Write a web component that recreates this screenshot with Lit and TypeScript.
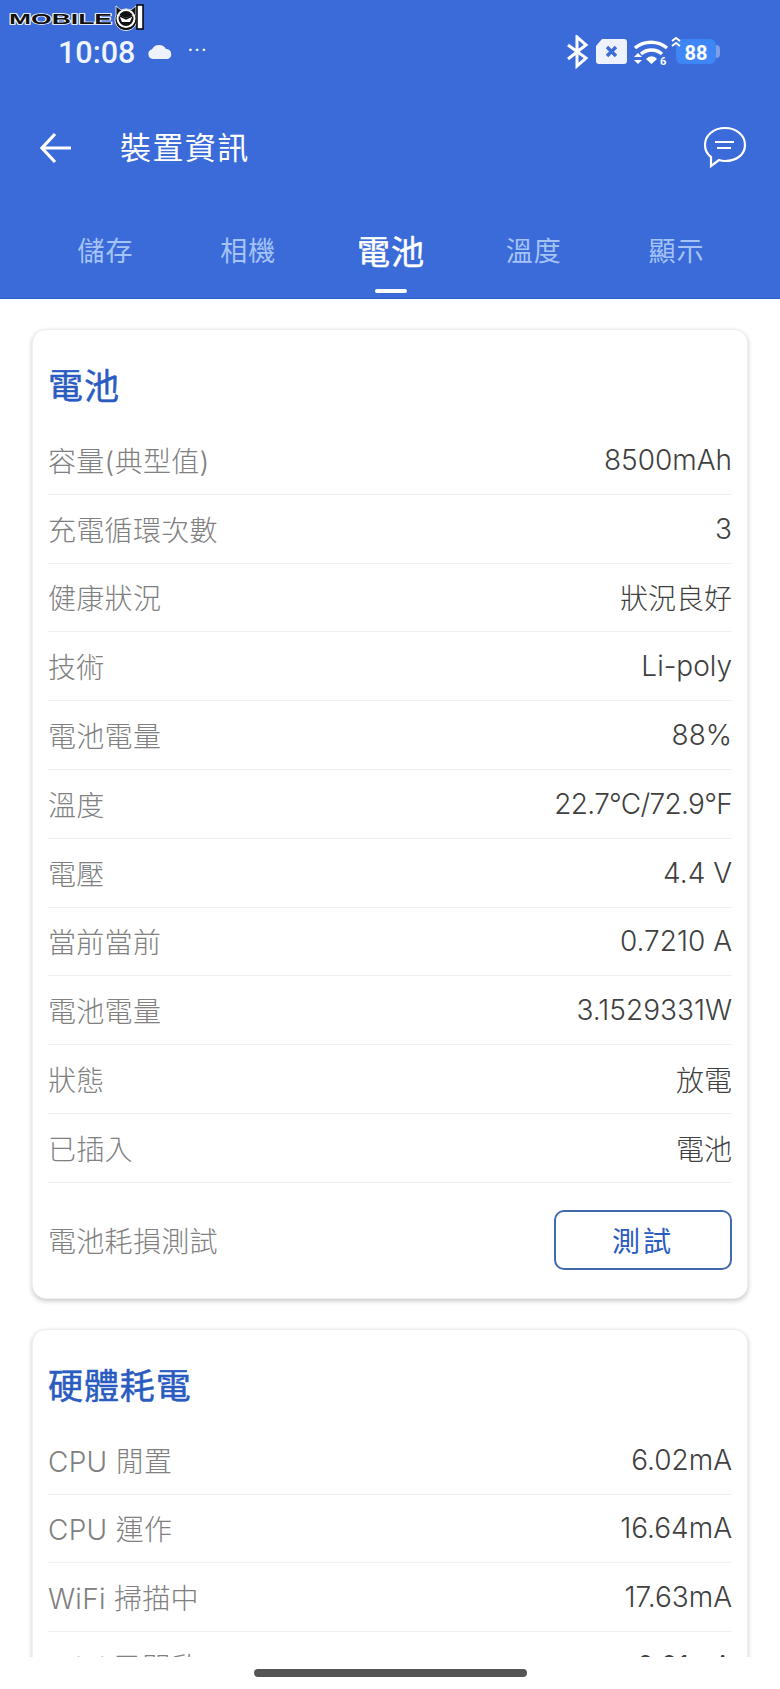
import { LitElement, html, css } from "lit";
import { customElement } from "lit/decorators.js";

const battery: [string, string, boolean?][] = [
  ["容量(典型值)", "8500mAh"],
  ["充電循環次數", "3"],
  ["健康狀況", "狀況良好"],
  ["技術", "Li-poly"],
  ["電池電量", "88%"],
  ["溫度", "22.7°C/72.9°F", true],
  ["電壓", "4.4 V"],
  ["當前當前", "0.7210 A"],
  ["電池電量", "3.1529331W"],
  ["狀態", "放電"],
  ["已插入", "電池"],
];
const hardware: [string, string, boolean?][] = [
  ["CPU 閒置", "6.02mA"],
  ["CPU 運作", "16.64mA"],
  ["WiFi 掃描中", "17.63mA"],
  ["WiFi 已開啟", "0.01mA"],
  ["WiFi 傳輸", "0.01mA"],
];

@customElement("app-root")
export class AppRoot extends LitElement {
  static styles = css`
    :host {
      display: flex;
      flex-direction: column;
      position: relative;
      width: 780px;
      height: 1689px;
      overflow: hidden;
      background: #fff;
      font-family: Inter, "Noto Sans CJK TC", sans-serif;
    }
    .logo { position: absolute; left: 8px; top: 4px; }
    .header { background: #3a6bd9; height: 299px; flex: none; display: flex; flex-direction: column; color: #fff; border-bottom: 1px solid #2f5dc6; box-sizing: border-box; }
    .status { height: 88px; flex: none; display: flex; align-items: center; justify-content: space-between; padding: 16px 59px 0 58px; box-sizing: border-box; font-family: Roboto, sans-serif; }
    .status-left { display: flex; align-items: center; gap: 12px; }
    .time { font-size: 30.5px; font-weight: 500; color: #f0f4fd; }
    .dots { font-size: 22px; letter-spacing: 1px; margin-left: 2px; margin-bottom: 4px; }
    .status-right { display: flex; align-items: center; }
    .toolbar { height: 120px; flex: none; display: flex; align-items: center; padding: 0 33px 0 39px; }
    .page-title { font-size: 31px; margin-left: 47px; flex: 1; font-weight: 400; letter-spacing: 1.4px; padding-bottom: 6px; }
    .tabs { flex: 1; display: grid; grid-template-columns: repeat(5, 142.8px); padding: 0 36px 0 34px; margin-top: 24px; }
    .tab { display: flex; flex-direction: column; align-items: center; font-size: 27px; color: #a5c3f6; height: 100%; position: relative; letter-spacing: 1px; }
    .tab span { line-height: 40px; }
    .tab.on { color: #fff; font-size: 33px; font-weight: 400; letter-spacing: 1px; -webkit-text-stroke: 0.5px #fff; }
    .tab.on::after { content: ""; position: absolute; bottom: 5px; width: 32px; height: 4px; border-radius: 2px; background: #fff; }
    .content { flex: 1; overflow: hidden; padding: 30px 32px 0; display: flex; flex-direction: column; gap: 30px; min-height: 0; }
    .card { flex: none; background: #fff; border-radius: 14px; border: 1px solid #efefef; box-shadow: 0 2px 5px rgba(0,0,0,.22); padding: 0 15px; }
    .card h2 { margin: 0; font-size: 35px; line-height: 44px; padding-top: 34px; padding-bottom: 18px; font-weight: 400; color: #2a5bc0; letter-spacing: 0.9px; -webkit-text-stroke: 0.5px #2a5bc0; }
    .row { display: flex; justify-content: space-between; align-items: center; box-sizing: border-box; height: 68.8px; border-bottom: 1px solid #f0f0f0; font-size: 28px; font-weight: 300; }
    .row:last-child { border-bottom: 0; }
    .k { color: #808080; letter-spacing: 0.3px; }
    .v { color: #404040; }
    .v.tight { letter-spacing: -0.7px; }
    .test { height: 115px; }
    .btn { width: 178px; height: 60px; box-sizing: border-box; border: 2px solid #4169ae; border-radius: 10px; color: #2a5bc0; font-size: 28px; font-weight: 400; display: flex; align-items: center; justify-content: center; letter-spacing: 3px; }
    .nav { height: 32px; flex: none; background: #fff; display: flex; justify-content: center; align-items: flex-start; padding-top: 12px; box-sizing: border-box; }
    .pill { width: 273px; height: 8px; border-radius: 4px; background: #555; }
  `;

  row(r: [string, string, boolean?]) {
    return html`<div class="row"><span class="k">${r[0]}</span><span class="v ${r[2] ? "tight" : ""}">${r[1]}</span></div>`;
  }

  render() {
    return html`
      <div class="header">
        <div class="status">
          <div class="status-left">
            <span class="time">10:08</span>
            <svg width="26" height="16" viewBox="0 0 26 16"><path d="M6 15a5 5 0 0 1-1-9.8A8 8 0 0 1 19 5a5.2 5.2 0 0 1 2 10z" fill="#eef2fc"/></svg>
            <span class="dots">···</span>
          </div>
          <div class="status-right">
            <svg width="154" height="34" viewBox="0 0 154 34">
              <path d="M1 10l18 13-9 8V2l9 8L1 24" fill="none" stroke="#fff" stroke-width="3"/>
              <path d="M35 4h22a3 3 0 0 1 3 3v19a3 3 0 0 1-3 3H32a3 3 0 0 1-3-3V11z" fill="#eef2fc"/>
              <path d="M40 12l9 9m0-9l-9 9" stroke="#3a6bd9" stroke-width="3.4"/>
              <path d="M68 13a25 25 0 0 1 32 0M74 19a16 16 0 0 1 21 0" fill="none" stroke="#fff" stroke-width="3.4"/>
              <path d="M79 24a7 7 0 0 1 11 0l-5.5 5z" fill="#fff"/>
              <path d="M67 22l4-4 4 4zM67 25l4 4 4-4z" fill="#fff"/>
              <text x="93" y="30" font-size="11" font-weight="700" fill="#fff" font-family="Roboto">6</text>
              <rect x="109" y="4" width="40" height="25" rx="6" fill="#3e86f5"/>
              <path d="M149 10a4 4 0 0 1 4 4v5a4 4 0 0 1-4 4z" fill="#7f9fe6"/>
              <path d="M105 6l4-3 4 3M105 11l4-3 4 3" fill="none" stroke="#fff" stroke-width="2"/>
              <text x="129" y="24.5" font-size="20" font-weight="700" text-anchor="middle" fill="#fff" font-family="Roboto">88</text>
            </svg>
          </div>
        </div>
        <div class="toolbar">
          <svg width="34" height="34" viewBox="0 0 34 34"><path d="M32 17H3M16 3L3 17l13 14" fill="none" stroke="#fff" stroke-width="3.2"/></svg>
          <span class="page-title">裝置資訊</span>
          <svg width="44" height="44" viewBox="0 0 44 44"><path d="M22 2c11 0 20 7 20 17s-9 16-20 16c-2 0-4-.3-6-1l-8 6v-9C4 28 2 24 2 19 2 9 11 2 22 2z" fill="none" stroke="#fff" stroke-width="2.2"/><path d="M12 16h19M14 22h14" stroke="#fff" stroke-width="2.2"/></svg>
        </div>
        <div class="tabs">
          <div class="tab"><span>儲存</span></div>
          <div class="tab"><span>相機</span></div>
          <div class="tab on"><span>電池</span></div>
          <div class="tab"><span>溫度</span></div>
          <div class="tab"><span>顯示</span></div>
        </div>
      </div>
      <div class="content">
        <div class="card">
          <h2>電池</h2>
          ${battery.map((r) => this.row(r))}
          <div class="row test"><span class="k">電池耗損測試</span><div class="btn">測試</div></div>
        </div>
        <div class="card">
          <h2>硬體耗電</h2>
          ${hardware.map((r) => this.row(r))}
        </div>
      </div>
      <div class="nav"><div class="pill"></div></div>
      <svg class="logo" width="140" height="28" viewBox="0 0 140 28">
        <text x="1" y="19.5" font-family="Liberation Sans" font-size="14" font-weight="700" textLength="103" lengthAdjust="spacingAndGlyphs" fill="#111" stroke="#fff" stroke-width="1.3" paint-order="stroke">MOBILE</text>
        <path d="M108 2l5 4a11 11 0 0 1 10 0l5-4v9a11 11 0 1 1-20 0z" fill="#111" stroke="#fff" stroke-width="0.8"/>
        <circle cx="118" cy="14.5" r="8.5" fill="#111" stroke="#fff" stroke-width="2"/>
        <path d="M111 11l7 3 7-3-3 7h-8z" fill="#fff"/>
        <path d="M112 12l6 3 6-3" fill="none" stroke="#111" stroke-width="1.5"/>
        <rect x="129" y="1" width="6" height="24" fill="#fff" stroke="#000" stroke-width="1.5"/>
      </svg>
    `;
  }
}
